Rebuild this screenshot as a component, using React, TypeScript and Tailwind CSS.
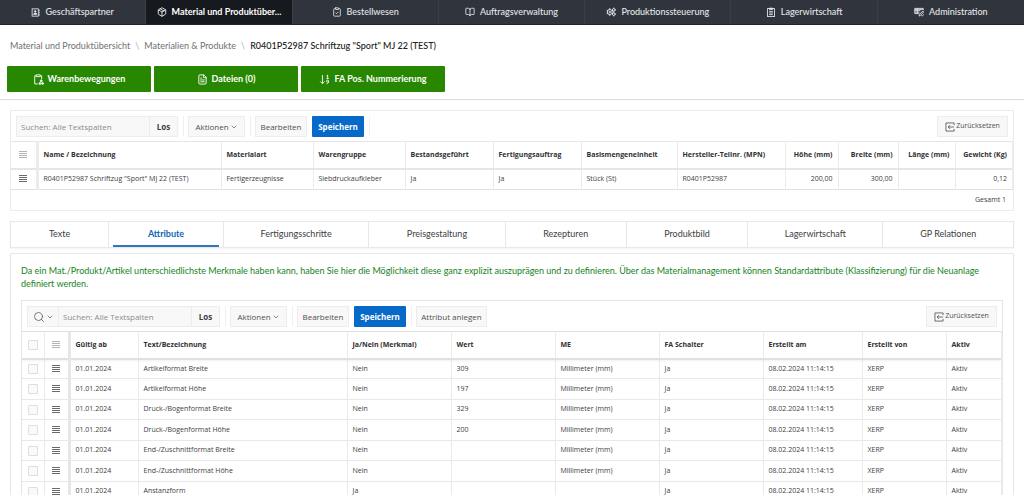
import type { ReactNode } from "react";
import { BookOpen, ChevronDown, ClipboardCheck, FileText, Package, Search } from "lucide-react";

type Col = { label: string; width: string; right?: boolean };

function ContactIcon() {
  return (
    <svg viewBox="0 0 16 16" className="size-[9px] shrink-0" fill="none" stroke="currentColor" strokeWidth="1.5">
      <rect x="2" y="1.5" width="11" height="13" />
      <path d="M14.8 3v2.5M14.8 7v2.5M14.8 11v2.5" />
      <circle cx="7.5" cy="6" r="1.4" fill="currentColor" />
      <path d="M4.5 11.3c0-3 6-3 6 0z" fill="currentColor" />
    </svg>
  );
}

function GearsIcon() {
  return (
    <svg viewBox="0 0 16 16" className="size-[10px] shrink-0" fill="none" stroke="currentColor" strokeWidth="1.6">
      <circle cx="6" cy="8" r="4" />
      <circle cx="6" cy="8" r="1.2" />
      <path d="M6 1.8V4M6 12v2.2M1 5.1l1.6.9M9.4 10l1.6.9M1 10.9l1.6-.9M9.4 6l1.2-.7" />
      <circle cx="12.4" cy="4.6" r="2.1" />
      <circle cx="12.4" cy="11.4" r="2.1" />
      <path d="M12.4 1v1.4M12.4 13.6V15M14.6 4.6H16M14.6 11.4H16M12.4 7v2" />
    </svg>
  );
}

function ListClipIcon() {
  return (
    <svg viewBox="0 0 16 16" className="size-[10px] shrink-0" fill="none" stroke="currentColor" strokeWidth="1.4">
      <rect x="2.5" y="2.5" width="11" height="12.8" />
      <path d="M5.5 1.8h5v2h-5z" fill="currentColor" />
      <path d="M5 7h6M5 9.6h6M5 12.2h6" />
    </svg>
  );
}

function AdminIcon() {
  return (
    <svg viewBox="0 0 16 16" className="size-[10px] shrink-0" fill="none" stroke="currentColor" strokeWidth="1.4">
      <path d="M8.5 10.5H1.2V2.2h13.6v3" />
      <path d="M1.2 5.8h9M1.2 8.2h7.5M5.3 2.2v8.3M1.2 3.8h13" />
      <path d="M8 14.5l.6-2.4 5.4-5.6 1.5 1.5-5.4 5.7zM12 13.5l1.2 1.2 2.3-3" />
    </svg>
  );
}

function ClipboardMoveIcon() {
  return (
    <svg viewBox="0 0 16 16" className="size-[11px] shrink-0" fill="none" stroke="currentColor" strokeWidth="1.3">
      <path d="M7 14.5H2.5v-12h2M10.5 2.5h2v5M4.5 1.2h6v2.6h-6z" />
      <circle cx="12" cy="10" r="1.4" fill="currentColor" />
      <circle cx="10" cy="13.8" r="1.3" fill="currentColor" />
      <circle cx="14" cy="13.8" r="1.3" fill="currentColor" />
    </svg>
  );
}

function SortIcon() {
  return (
    <svg viewBox="0 0 16 16" className="size-[11px] shrink-0" fill="none" stroke="currentColor" strokeWidth="1.3">
      <path d="M5 1.5v12.5M1.8 10.8L5 14l3.2-3.2M11 2.5l1.6-1v5M10.8 6.5h3.4" />
      <circle cx="12.5" cy="10.4" r="1.5" />
      <path d="M14 10.4c0 2.2-.6 3.6-2.8 3.8" />
    </svg>
  );
}

function ResetIcon() {
  return (
    <svg viewBox="0 0 16 16" className="size-[10px] shrink-0" fill="none" stroke="currentColor" strokeWidth="1.3">
      <path d="M14.5 5V1.5h-13v13h13V11M14.5 8H5M8 5L5 8l3 3" />
    </svg>
  );
}

function RowMenu({ light }: { light?: boolean }) {
  return (
    <button aria-label="Zeilenmenü" className={light ? "mx-auto block text-[#b4b4b4]" : "mx-auto block text-[#6a6a6a]"}>
      <svg viewBox="0 0 8 8" className="size-2" fill="none" stroke="currentColor" strokeWidth="1">
        <path d="M0 .5h8M0 2.5h8M0 4.5h8M0 6.5h8" />
      </svg>
    </button>
  );
}

const nav = [
  { label: "Geschäftspartner", icon: <ContactIcon /> },
  { label: "Material und Produktüber...", icon: <Package size={10} className="shrink-0" />, active: true },
  { label: "Bestellwesen", icon: <ClipboardCheck size={10} className="shrink-0" /> },
  { label: "Auftragsverwaltung", icon: <BookOpen size={10} className="shrink-0" /> },
  { label: "Produktionssteuerung", icon: <GearsIcon /> },
  { label: "Lagerwirtschaft", icon: <ListClipIcon /> },
  { label: "Administration", icon: <AdminIcon /> },
];

const actions = [
  { label: "Warenbewegungen", icon: <ClipboardMoveIcon /> },
  { label: "Dateien (0)", icon: <FileText size={11} /> },
  { label: "FA Pos. Nummerierung", icon: <SortIcon /> },
];

const tabs = [
  { label: "Texte", grow: "grow-[96]" },
  { label: "Attribute", grow: "grow-[114]", active: true },
  { label: "Fertigungsschritte", grow: "grow-[147]" },
  { label: "Preisgestaltung", grow: "grow-[137]" },
  { label: "Rezepturen", grow: "grow-[121]" },
  { label: "Produktbild", grow: "grow-[121]" },
  { label: "Lagerwirtschaft", grow: "grow-[136]" },
  { label: "GP Relationen", grow: "grow-[131]" },
];

const productCols: Col[] = [
  { label: "Name / Bezeichnung", width: "w-[184px]" },
  { label: "Materialart", width: "w-[92px]" },
  { label: "Warengruppe", width: "w-[92px]" },
  { label: "Bestandsgeführt", width: "w-[88px]" },
  { label: "Fertigungsauftrag", width: "w-[88px]" },
  { label: "Basismengeneinheit", width: "w-[96px]" },
  { label: "Hersteller-Teilnr. (MPN)", width: "w-[108px]" },
  { label: "Höhe (mm)", width: "w-[53px]", right: true },
  { label: "Breite (mm)", width: "w-[60px]", right: true },
  { label: "Länge (mm)", width: "w-[57px]", right: true },
  { label: "Gewicht (Kg)", width: "w-[58px]", right: true },
];

const product = ['R0401P52987 Schriftzug "Sport" MJ 22 (TEST)', "Fertigerzeugnisse", "Siebdruckaufkleber", "Ja", "Ja", "Stück (St)", "R0401P52987", "200,00", "300,00", "", "0,12"];

const attrCols: Col[] = [
  { label: "Gültig ab", width: "w-[69px]" },
  { label: "Text/Bezeichnung", width: "w-[209px]" },
  { label: "Ja/Nein (Merkmal)", width: "w-[104px]" },
  { label: "Wert", width: "w-[104px]" },
  { label: "ME", width: "w-[104px]" },
  { label: "FA Schalter", width: "w-[104px]" },
  { label: "Erstellt am", width: "w-[99px]" },
  { label: "Erstellt von", width: "w-[84px]" },
  { label: "Aktiv", width: "w-[56px]" },
];

const attributes = [
  ["Artikelformat Breite", "Nein", "309", "Millimeter (mm)"],
  ["Artikelformat Höhe", "Nein", "197", "Millimeter (mm)"],
  ["Druck-/Bogenformat Breite", "Nein", "329", "Millimeter (mm)"],
  ["Druck-/Bogenformat Höhe", "Nein", "200", "Millimeter (mm)"],
  ["End-/Zuschnittformat Breite", "Nein", "", "Millimeter (mm)"],
  ["End-/Zuschnittformat Höhe", "Nein", "", "Millimeter (mm)"],
  ["Anstanzform", "Ja", "", ""],
].map(([text, yesNo, value, unit]) => ["01.01.2024", text, yesNo, value, unit, "Ja", "08.02.2024 11:14:15", "XERP", "Aktiv"]);

const grayBtn = "flex h-[21px] items-center justify-center gap-px border border-[#ededed] bg-[#f8f8f8] text-[#505050]";

function Divider() {
  return <span className="mr-1 ml-[5px] h-5 w-px bg-[#f0f0f0]" />;
}

function Toolbar({ label, withSearchMenu, children }: { label: string; withSearchMenu?: boolean; children?: ReactNode }) {
  return (
    <div className="flex items-start px-[5px] pt-[5px] pb-1 text-[8px]">
      {withSearchMenu && (
        <button aria-label="Spalte wählen" className={`${grayBtn} w-[31px] border-r-0`}>
          <Search size={12} strokeWidth={1.5} />
          <ChevronDown size={8} strokeWidth={2} />
        </button>
      )}
      <input aria-label={label} placeholder="Suchen: Alle Textspalten" className="h-[21px] w-[134px] border border-[#ededed] bg-[#f8f8f8] px-1 placeholder:text-[#8c8c8c]" />
      <button className="h-[21px] w-7 border border-l-0 border-[#ededed] bg-[#f8f8f8] font-bold text-[#404040]">Los</button>
      <Divider />
      <button className={`${grayBtn} w-[57px]`}>Aktionen<ChevronDown size={8} strokeWidth={2} /></button>
      <Divider />
      <button className={`${grayBtn} w-[52px]`}>Bearbeiten</button>
      <button className="ml-[5px] h-[21px] w-[52px] rounded-[1px] bg-[#0769c8] font-bold text-white">Speichern</button>
      <Divider />
      {children}
      <button className={`${grayBtn} ml-auto h-5 w-[71px] gap-1 whitespace-nowrap`}>
        <ResetIcon /><span className="text-[7px]">Zurücksetzen</span>
      </button>
    </div>
  );
}

function HeadCells({ cols }: { cols: Col[] }) {
  return cols.map((c) => (
    <th key={c.label} scope="col" className={`${c.width} overflow-hidden border-r border-[#ebebeb] px-[5px] font-bold whitespace-nowrap text-[#303030] last:border-r-2 ${c.right ? "text-right" : "text-left"}`}>{c.label}</th>
  ));
}

function BodyCells({ cols, values }: { cols: Col[]; values: string[] }) {
  return cols.map((c, i) => (
    <td key={c.label} className={`overflow-hidden border-r border-[#ebebeb] px-[5px] whitespace-nowrap last:border-r-2 ${c.right ? "text-right" : ""}`}>{values[i]}</td>
  ));
}

export default function App() {
  return (
    <div className="flex h-screen flex-col overflow-hidden bg-white font-['Lato','Open_Sans',sans-serif] text-[9px] text-[#404040]">
      <nav className="grid h-[25px] shrink-0 grid-cols-7 border-b border-[#20242a] bg-[#30353d]">
        {nav.map((n) => (
          <a key={n.label} href="#" className={`flex items-center justify-center gap-[5px] border-r border-[#3a3f47] whitespace-nowrap last:border-r-0 ${n.active ? "bg-[#16191d] font-bold text-white" : "font-medium text-[#e4e6e9]"}`}>
            {n.icon}{n.label}
          </a>
        ))}
      </nav>

      <header className="shrink-0 border-b border-[#dcdcdc] px-[7px] pb-[7px]">
        <div className="flex h-[41px] items-center gap-[5px] px-[3px] text-[#707070]">
          <a href="#">Material und Produktübersicht</a>
          <span className="text-[#b0b0b0]">\</span>
          <a href="#">Materialien &amp; Produkte</a>
          <span className="text-[#b0b0b0]">\</span>
          <h1 className="font-medium text-[#202020]">R0401P52987 Schriftzug "Sport" MJ 22 (TEST)</h1>
        </div>
        <div className="flex gap-[3px]">
          {actions.map((a) => (
            <button key={a.label} className="flex h-[26px] w-36 items-center justify-center gap-1 rounded-[1px] bg-[#278701] font-bold text-white">
              {a.icon}{a.label}
            </button>
          ))}
        </div>
      </header>

      <main className="flex min-h-0 grow flex-col px-[10px] pt-[10px]">
        <section className="shrink-0 border border-[#ebebeb] font-['Open_Sans','Noto_Sans',sans-serif]">
          <Toolbar label="Produkt suchen" />
          <table className="w-full table-fixed border-collapse text-[7px]">
            <thead>
              <tr className="h-[27px] border-t border-b-2 border-[#e6e6e6]">
                <th className="w-[26px] border-r-3 border-[#ebebeb]"><RowMenu light /></th>
                <HeadCells cols={productCols} />
              </tr>
            </thead>
            <tbody>
              <tr className="h-[21px] border-b border-[#e0e0e0]">
                <td className="border-r-3 border-[#ebebeb]"><RowMenu /></td>
                <BodyCells cols={productCols} values={product} />
              </tr>
            </tbody>
          </table>
          <p className="flex h-5 items-center justify-end px-[7px] text-[7px]">Gesamt 1</p>
        </section>

        <div role="tablist" className="mt-[10px] flex h-[27px] shrink-0 border border-[#e8e8e8] shadow-xs">
          {tabs.map((t) => (
            <button key={t.label} role="tab" aria-selected={!!t.active} className={`${t.grow} flex basis-0 border-r border-[#e8e8e8] px-1 last:border-r-0`}>
              <span className={`flex h-full grow items-center justify-center border-b-2 ${t.active ? "border-[#2f78bd] font-bold text-[#0f66b3]" : "border-transparent"}`}>{t.label}</span>
            </button>
          ))}
        </div>

        <section className="mt-[5px] flex min-h-0 grow flex-col border border-b-0 border-[#e8e8e8] px-[10px] pt-[10px]">
          <p className="mb-[10px] leading-[13px] text-[#16831a]">
            Da ein Mat./Produkt/Artikel unterschiedlichste Merkmale haben kann, haben Sie hier die Möglichkeit diese ganz explizit auszuprägen und zu definieren. Über das Materialmanagement können Standardattribute (Klassifizierung) für die Neuanlage definiert werden.
          </p>
          <div className="min-h-0 grow overflow-hidden border border-b-0 border-[#e6e6e6] font-['Open_Sans','Noto_Sans',sans-serif]">
            <Toolbar label="Attribute suchen" withSearchMenu>
              <button className={`${grayBtn} w-[71px]`}>Attribut anlegen</button>
            </Toolbar>
            <table className="w-full table-fixed border-collapse text-[7px]">
              <thead className="shadow-sm">
                <tr className="h-[27px] border-t border-b-2 border-[#e0e0e0]">
                  <th className="w-[22px] border-r border-[#ebebeb]">
                    <input type="checkbox" aria-label="Alle auswählen" className="mx-auto block size-[10px] appearance-none rounded-[1px] border border-[#dedede] bg-[#fafafa]" />
                  </th>
                  <th className="w-[25px] border-r-3 border-[#e6e6e6]"><RowMenu light /></th>
                  <HeadCells cols={attrCols} />
                </tr>
              </thead>
              <tbody>
                {attributes.map((row) => (
                  <tr key={row[1]} className="border-b border-[#e8e8e8] odd:h-5 even:h-[21px]">
                    <td className="border-r border-[#ebebeb]">
                      <input type="checkbox" aria-label={row[1]} className="mx-auto block size-[10px] appearance-none rounded-[1px] border border-[#dedede] bg-[#fafafa]" />
                    </td>
                    <td className="border-r-3 border-[#e6e6e6]"><RowMenu /></td>
                    <BodyCells cols={attrCols} values={row} />
                  </tr>
                ))}
              </tbody>
            </table>
          </div>
        </section>
      </main>
    </div>
  );
}
